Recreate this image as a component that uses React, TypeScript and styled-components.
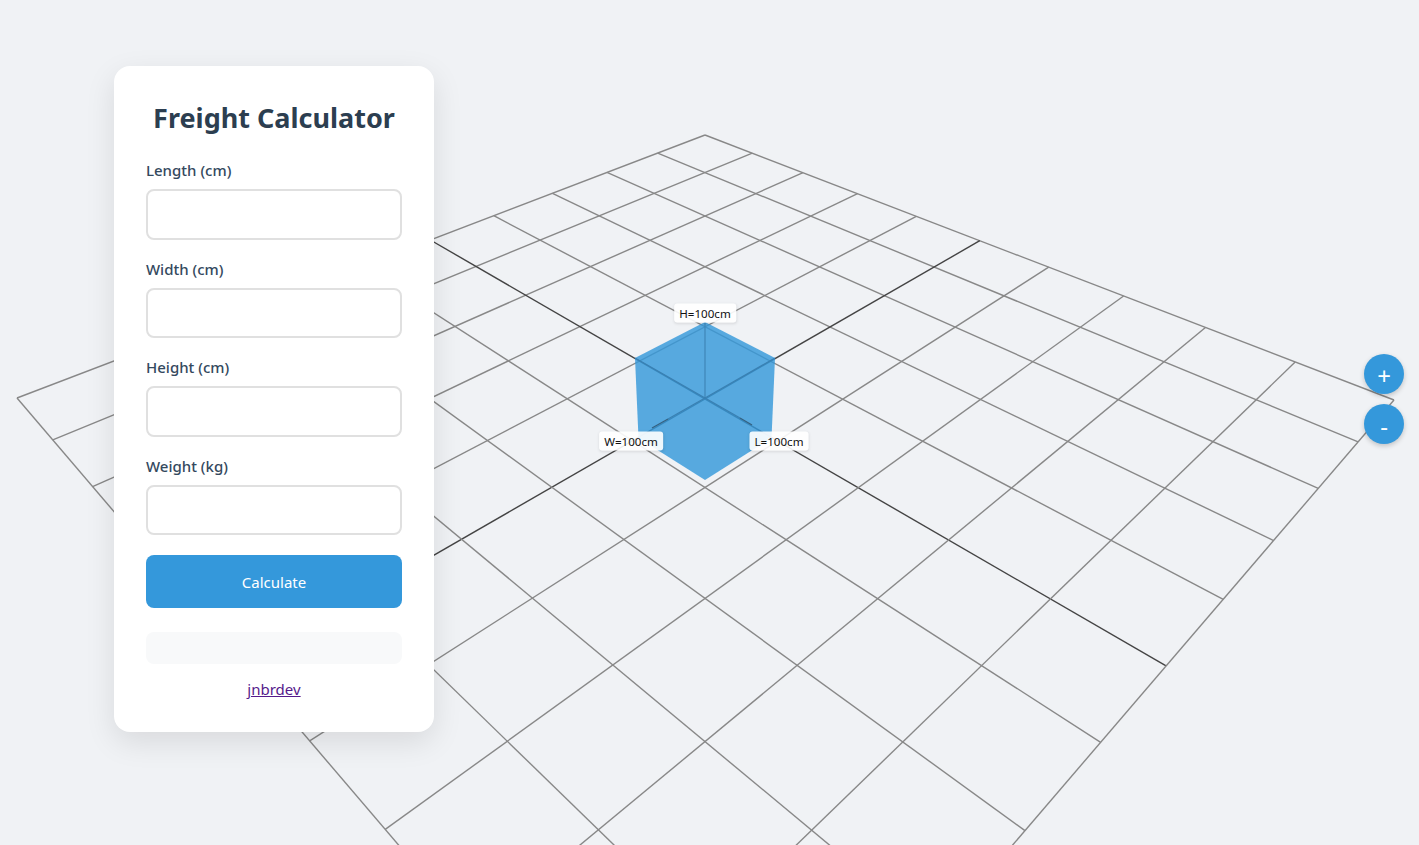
import React from 'react'
import styled, {createGlobalStyle} from 'styled-components'

type Pt = [number, number]

// grid corners as seen on screen, the bottom one is below the fold
const TOP: Pt = [705, 135]
const RIGHT: Pt = [1394, 400]
const LEFT: Pt = [17, 398]
const BOTTOM: Pt = [705, 1204]
const DIVISIONS = 10

// unit square -> quad, u runs top->right, v runs top->left
const project = (u: number, v: number): Pt => {
  const [x0, y0] = TOP
  const [x1, y1] = RIGHT
  const [x2, y2] = BOTTOM
  const [x3, y3] = LEFT
  const dx1 = x1 - x2
  const dx2 = x3 - x2
  const sx = x0 - x1 + x2 - x3
  const dy1 = y1 - y2
  const dy2 = y3 - y2
  const sy = y0 - y1 + y2 - y3
  const den = dx1 * dy2 - dx2 * dy1
  const g = (sx * dy2 - dx2 * sy) / den
  const h = (dx1 * sy - sx * dy1) / den
  const a = x1 - x0 + g * x1
  const b = x3 - x0 + h * x3
  const d = y1 - y0 + g * y1
  const e = y3 - y0 + h * y3
  const w = g * u + h * v + 1
  return [(a * u + b * v + x0) / w, (d * u + e * v + y0) / w]
}

const gridLines = Array.from({length: DIVISIONS + 1}, (_, i) => i / DIVISIONS)

const GridLine = ({from, to, center}: {from: Pt; to: Pt; center: boolean}) => (
  <line
    x1={from[0]}
    y1={from[1]}
    x2={to[0]}
    y2={to[1]}
    stroke={center ? '#444444' : '#888888'}
    strokeWidth={1.4}
  />
)

// lines that show through the box: [x1, y1, x2, y2, colour]
const boxEdges: [number, number, number, number, string][] = [
  [705, 323, 705, 398, '#3f86b8'],
  [635, 358, 705, 398, '#3a80b2'],
  [775, 358, 705, 398, '#3a80b2'],
  [705, 398, 668, 419, '#3a80b2'],
  [705, 398, 740, 418, '#3a80b2'],
  [668, 419, 652, 428, '#35607f'],
  [740, 418, 752, 425, '#35607f'],
]

const Scene = () => (
  <SceneSvg viewBox="0 0 1419 845">
    {gridLines.map((t, i) => (
      <React.Fragment key={i}>
        <GridLine from={project(t, 0)} to={project(t, 1)} center={i === 5} />
        <GridLine from={project(0, t)} to={project(1, t)} center={i === 5} />
      </React.Fragment>
    ))}
    <polygon
      points="705,322 775,358 771.5,438 705,480 638.5,438 635,358"
      fill="#3498db"
      fillOpacity={0.82}
    />
    {boxEdges.map(([x1, y1, x2, y2, color], i) => (
      <line key={i} x1={x1} y1={y1} x2={x2} y2={y2} stroke={color} strokeWidth={1.2} />
    ))}
  </SceneSvg>
)

const fields = ['Length (cm)', 'Width (cm)', 'Height (cm)', 'Weight (kg)']

const App = () => (
  <>
    <GlobalStyle />
    <Page>
      <Scene />
      <DimLabel $x={705} $y={313}>H=100cm</DimLabel>
      <DimLabel $x={631} $y={441}>W=100cm</DimLabel>
      <DimLabel $x={779} $y={441}>L=100cm</DimLabel>
      <Panel>
        <Title>Freight Calculator</Title>
        {fields.map(label => (
          <Field key={label}>
            <FieldLabel>{label}</FieldLabel>
            <FieldInput type="number" />
          </Field>
        ))}
        <CalcButton>Calculate</CalcButton>
        <ResultBox />
        <Credit>
          <a href="#jnbrdev">jnbrdev</a>
        </Credit>
      </Panel>
      <ZoomControls>
        <ZoomButton>+</ZoomButton>
        <ZoomButton>-</ZoomButton>
      </ZoomControls>
    </Page>
  </>
)

const GlobalStyle = createGlobalStyle`
  html, body {
    margin: 0;
    height: 100%;
    overflow: hidden;
    background: #f0f2f5;
    font-family: "Noto Sans", "Open Sans", sans-serif;
  }
  a {
    color: #551a8b;
  }
`
const Page = styled.div`
  position: relative;
  width: 100vw;
  height: 100vh;
  padding: 66px 0 0 114px;
  box-sizing: border-box;
`
const SceneSvg = styled.svg`
  position: absolute;
  inset: 0;
  width: 1419px;
  height: 845px;
`
const DimLabel = styled.div<{$x: number; $y: number}>`
  position: absolute;
  left: ${p => p.$x}px;
  top: ${p => p.$y}px;
  transform: translate(-50%, -50%);
  padding: 2px 5px;
  background: rgba(255, 255, 255, 0.9);
  border-radius: 3px;
  box-shadow: 0 1px 3px rgba(0, 0, 0, 0.1);
  font-size: 11.6px;
  line-height: 15px;
  color: #111111;
  white-space: nowrap;
`
const Panel = styled.div`
  position: relative;
  width: 320px;
  height: 666px;
  box-sizing: border-box;
  padding: 32px;
  display: flex;
  flex-direction: column;
  background: #ffffff;
  border-radius: 16px;
  box-shadow: 0 10px 30px rgba(0, 0, 0, 0.1);
`
const Title = styled.h1`
  margin: 0 0 23px;
  font-size: 27px;
  line-height: 40px;
  font-weight: 700;
  text-align: center;
  color: #2c3e50;
`
const Field = styled.div`
  margin-bottom: 20px;
`
const FieldLabel = styled.label`
  display: block;
  margin-bottom: 10px;
  font-size: 15px;
  line-height: 18px;
  font-weight: 500;
  color: #34495e;
`
const FieldInput = styled.input`
  display: block;
  width: 100%;
  height: 50.5px;
  box-sizing: border-box;
  border: 2px solid #e0e0e0;
  border-radius: 8px;
  background: #ffffff;
  outline: none;
`
const CalcButton = styled.button`
  width: 100%;
  height: 53px;
  flex-shrink: 0;
  border: none;
  border-radius: 8px;
  background: #3498db;
  color: #ffffff;
  font: inherit;
  font-size: 15px;
`
const ResultBox = styled.div`
  height: 32px;
  flex-shrink: 0;
  margin-top: 24px;
  border-radius: 8px;
  background: #f8f9fa;
`
const Credit = styled.div`
  margin-top: 14px;
  text-align: center;
  font-size: 15px;
  line-height: 22px;
`
const ZoomControls = styled.div`
  position: absolute;
  top: 354px;
  right: 15px;
  display: flex;
  flex-direction: column;
  gap: 10px;
`
const ZoomButton = styled.button`
  width: 40px;
  height: 40px;
  padding: 4px 0 0;
  border: none;
  border-radius: 50%;
  background: #3498db;
  color: #ffffff;
  font: inherit;
  font-size: 24px;
  line-height: 36px;
  box-shadow: 0 2px 5px rgba(0, 0, 0, 0.2);
`

export default App
